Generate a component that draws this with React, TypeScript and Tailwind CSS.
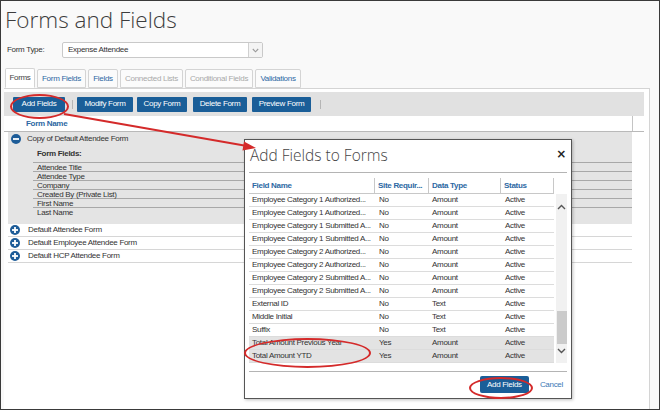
import React from 'react';

const tabs = [
  { label: 'Forms', cls: 'w-[30px] bg-white text-[#444] h-[20px] border-b-white' },
  { label: 'Form Fields', cls: 'w-[49px] text-[#2d68a3] h-[19px]' },
  { label: 'Fields', cls: 'w-[30px] text-[#2d68a3] h-[19px]' },
  { label: 'Connected Lists', cls: 'w-[63px] text-[#a9a9a9] h-[19px]' },
  { label: 'Conditional Fields', cls: 'w-[68px] text-[#a9a9a9] h-[19px]' },
  { label: 'Validations', cls: 'w-[46px] text-[#2d68a3] h-[19px]' },
];

const formFields = ['Attendee Title', 'Attendee Type', 'Company', 'Created By (Private List)', 'First Name', 'Last Name'];

const otherForms = ['Default Attendee Form', 'Default Employee Attendee Form', 'Default HCP Attendee Form'];

const rows = [
  ['Employee Category 1 Authorized...', 'No', 'Amount'],
  ['Employee Category 1 Authorized...', 'No', 'Amount'],
  ['Employee Category 1 Submitted A...', 'No', 'Amount'],
  ['Employee Category 1 Submitted A...', 'No', 'Amount'],
  ['Employee Category 2 Authorized...', 'No', 'Amount'],
  ['Employee Category 2 Authorized...', 'No', 'Amount'],
  ['Employee Category 2 Submitted A...', 'No', 'Amount'],
  ['Employee Category 2 Submitted A...', 'No', 'Amount'],
  ['External ID', 'No', 'Text'],
  ['Middle Initial', 'No', 'Text'],
  ['Suffix', 'No', 'Text'],
  ['Total Amount Previous Year', 'Yes', 'Amount'],
  ['Total Amount YTD', 'Yes', 'Amount'],
];

function CircleIcon({ plus }: { plus?: boolean }) {
  return (
    <svg width="10" height="10" viewBox="0 0 10 10" className="shrink-0">
      <circle cx="5" cy="5" r="5" fill="#1d5c98" />
      <rect x="2" y="4.1" width="6" height="1.8" fill="#fff" />
      {plus && <rect x="4.1" y="2" width="1.8" height="6" fill="#fff" />}
    </svg>
  );
}

function Btn({ label, w }: { label: string; w: string }) {
  return (
    <div className={`${w} h-[15px] bg-[#1a5e98] text-white flex items-center justify-center rounded-[1px] whitespace-nowrap`}>{label}</div>
  );
}

export default function App() {
  return (
    <div className="relative w-[660px] h-[410px] overflow-hidden border border-[#3a3a3a] bg-[#f9f9f9] text-[8px] tracking-[-0.3px] text-[#333] font-['Liberation_Sans',Arial,sans-serif]">
      {/* page title */}
      <div className="pl-[4px] pt-[2px] h-[38px] text-[22.5px] tracking-normal leading-[34px] font-light text-[#3d3d3d] font-['Open_Sans',sans-serif]">
        Forms and Fields
      </div>

      {/* form type */}
      <div className="flex items-center h-[16px] mt-[3px] pl-[6px]">
        <span className="w-[55px]">Form Type:</span>
        <div className="flex items-center w-[201px] h-[16px] border border-[#c9c9c9] bg-white rounded-[2px]">
          <span className="pl-[5px] flex-1">Expense Attendee</span>
          <div className="w-[14px] h-full border-l border-[#d0d0d0] flex items-center justify-center bg-[#f4f4f4]">
            <svg width="7" height="5" viewBox="0 0 7 5">
              <path d="M0.8 1 L3.5 3.8 L6.2 1" fill="none" stroke="#9a9a9a" strokeWidth="1.1" />
            </svg>
          </div>
        </div>
      </div>

      {/* tabs */}
      <div className="flex items-end gap-[2px] pl-[4px] mt-[10px] h-[20px]">
        {tabs.map((t) => (
          <div
            key={t.label}
            className={`${t.cls} flex items-center justify-center whitespace-nowrap border border-[#d4d4d4] rounded-t-[2px] bg-[#fbfbfb]`}
          >
            {t.label}
          </div>
        ))}
      </div>

      {/* panel */}
      <div className="ml-[3px] w-[646px] h-[322px] border-t border-r border-[#d4d4d4] bg-white pt-[3px]">
        {/* toolbar */}
        <div className="flex items-center w-[640px] h-[24px] bg-[#e1e1e1] pl-[9px]">
          <Btn label="Add Fields" w="w-[52px]" />
          <div className="ml-[7px] w-px h-[9px] bg-[#b5b5b5]" />
          <div className="ml-[4px]"><Btn label="Modify Form" w="w-[56px]" /></div>
          <div className="ml-[4px]"><Btn label="Copy Form" w="w-[50px]" /></div>
          <div className="ml-[6px]"><Btn label="Delete Form" w="w-[54px]" /></div>
          <div className="ml-[5px]"><Btn label="Preview Form" w="w-[59px]" /></div>
          <div className="ml-[9px] w-px h-[9px] bg-[#b5b5b5]" />
        </div>

        {/* table header */}
        <div className="flex w-[640px] h-[16px] border-b border-[#b9b9b9]">
          <div className="w-[628px] pl-[22px] flex items-center text-[#2d68a3] font-bold">Form Name</div>
          <div className="w-px h-full bg-[#c4c4c4]" />
        </div>

        {/* expanded form */}
        <div className="ml-[4px] w-[624px] h-[92px] bg-[#e4e4e4]">
          <div className="flex items-center gap-[6px] h-[14px] pl-[3px]">
            <CircleIcon />
            <span>Copy of Default Attendee Form</span>
          </div>
          <div className="pl-[29px] h-[16px] flex items-center font-bold">Form Fields:</div>
          <div className="ml-[25px]">
            {formFields.map((f) => (
              <div key={f} className="h-[9px] leading-[9px] border-t border-[#a8a8a8] pl-[4px]">
                {f}
              </div>
            ))}
          </div>
        </div>

        {/* collapsed forms */}
        <div className="ml-[4px] w-[624px]">
          {otherForms.map((f) => (
            <div key={f} className="flex items-center gap-[8px] h-[13px] border-b border-[#d6d6d6] pl-[2px] bg-white">
              <CircleIcon plus />
              <span>{f}</span>
            </div>
          ))}
        </div>
      </div>

      {/* dialog */}
      <div className="absolute left-[243px] top-[138px] w-[328px] h-[260px] border border-[#555] bg-white shadow-[1px_1px_3px_rgba(0,0,0,0.25)] px-[4px]">
        <div className="relative h-[33px] border-b border-[#b4b4b4] flex items-center">
          <span className="text-[15.5px] tracking-normal font-light text-[#444] font-['Open_Sans',sans-serif] pl-[1px]">Add Fields to Forms</span>
          <span className="absolute right-[1px] top-[5px] text-[12px] font-bold text-[#222] font-['DejaVu_Sans',sans-serif]">×</span>
        </div>

        <div className="mt-[5px] flex">
          <div className="w-[305px]">
            <div className="flex h-[16px] border-b border-[#c8c8c8] text-[#2d68a3] font-bold whitespace-nowrap">
              <div className="w-[126px] pl-[3px] flex items-center border-r border-[#c8c8c8]">Field Name</div>
              <div className="w-[54px] pl-[3px] flex items-center border-r border-[#c8c8c8]">Site Requir...</div>
              <div className="w-[72px] pl-[3px] flex items-center border-r border-[#c8c8c8]">Data Type</div>
              <div className="w-[53px] pl-[3px] flex items-center border-r border-[#c8c8c8]">Status</div>
            </div>
            {rows.map((r, i) => (
              <div
                key={i}
                className={`flex h-[13px] border-b border-[#dcdcdc] items-center whitespace-nowrap ${i >= 11 ? 'bg-[#e3e3e3]' : 'bg-white'}`}
              >
                <div className="w-[126px] pl-[3px]">{r[0]}</div>
                <div className="w-[54px] pl-[4px]">{r[1]}</div>
                <div className="w-[72px] pl-[3px]">{r[2]}</div>
                <div className="w-[53px] pl-[4px]">Active</div>
              </div>
            ))}
          </div>
          {/* scrollbar */}
          <div className="ml-[2px] mt-[16px] w-[12px] h-[169px] bg-[#f1f1f1] flex flex-col items-center">
            <svg width="9" height="6" viewBox="0 0 9 6" className="mt-[10px]">
              <path d="M1 5 L4.5 1.5 L8 5" fill="none" stroke="#555" strokeWidth="1.4" />
            </svg>
            <div className="mt-[101px] w-[10px] h-[33px] bg-[#cbcbcb]" />
            <svg width="9" height="6" viewBox="0 0 9 6" className="mt-[4px]">
              <path d="M1 1 L4.5 4.5 L8 1" fill="none" stroke="#555" strokeWidth="1.4" />
            </svg>
          </div>
        </div>

        <div className="mt-[8px] border-t border-[#b4b4b4] h-[26px] flex items-center justify-end pr-[4px]">
          <div className="w-[49px] h-[17px] bg-[#1a5e98] text-white flex items-center justify-center rounded-[2px]">Add Fields</div>
          <span className="ml-[11px] text-[#3b78b5]">Cancel</span>
        </div>
      </div>

      {/* annotations */}
      <div className="absolute left-[9px] top-[93px] w-[59px] h-[25px] rounded-[50%] border-2 border-[#d42a2a]" />
      <div className="absolute left-[243px] top-[337px] w-[127px] h-[30px] rounded-[50%] border-2 border-[#d42a2a]" />
      <div className="absolute left-[468px] top-[376px] w-[64px] h-[22px] rounded-[50%] border-2 border-[#d42a2a]" />
      <svg className="absolute left-0 top-0 pointer-events-none" width="660" height="410" viewBox="0 0 660 410">
        <line x1="63" y1="113" x2="246" y2="145" stroke="#d42a2a" strokeWidth="2" />
        <polygon points="255,147 243,140.5 241.5,149.5" fill="#d42a2a" />
      </svg>
    </div>
  );
}
